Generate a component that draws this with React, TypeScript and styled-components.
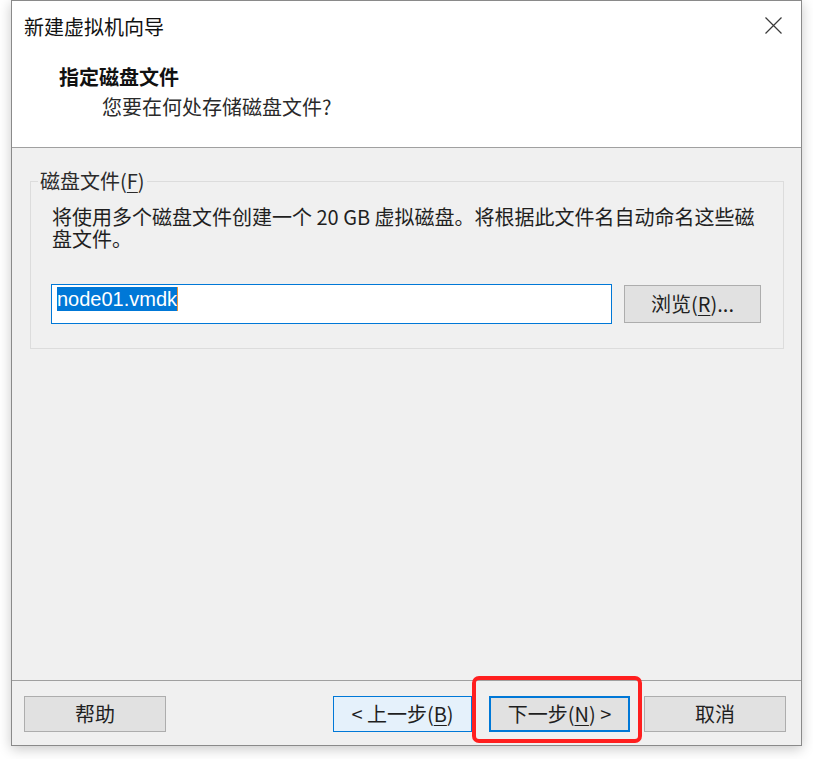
import React from "react";
import styled, { createGlobalStyle, css } from "styled-components";

const GlobalStyle = createGlobalStyle`
  html, body {
    margin: 0;
    padding: 0;
    background: #ffffff;
  }
  body {
    font-family: "Microsoft YaHei", "Noto Sans CJK SC", "Noto Sans", sans-serif;
    color: #1a1a1a;
  }
`;

const Page = styled.div`
  width: 813px;
  height: 759px;
  padding-left: 11px;
  box-sizing: border-box;
  background: #ffffff;
  overflow: hidden;
`;

const Window = styled.div`
  width: 791px;
  height: 746px;
  box-sizing: border-box;
  border: 1px solid #8a8a8a;
  display: flex;
  flex-direction: column;
  background: #f0f0f0;
  box-shadow: 0 3px 12px rgba(0, 0, 0, 0.22);
`;

const TitleBar = styled.div`
  height: 51px;
  flex: none;
  display: flex;
  align-items: center;
  justify-content: space-between;
  padding: 0 19px 0 12px;
  background: #ffffff;
`;

const TitleText = styled.span`
  font-size: 20px;
  line-height: 28px;
  color: #111111;
`;

const CloseIcon = styled.svg`
  display: block;
  margin-top: -2px;
`;

const Header = styled.div`
  height: 96px;
  flex: none;
  box-sizing: border-box;
  padding: 11px 0 0 47px;
  background: #ffffff;
  border-bottom: 1px solid #a0a0a0;
  display: flex;
  flex-direction: column;
`;

const HeaderTitle = styled.div`
  font-size: 20px;
  line-height: 28px;
  font-weight: 700;
  color: #111111;
`;

const HeaderSubtitle = styled.div`
  font-size: 20px;
  line-height: 28px;
  margin-top: 2px;
  padding-left: 43px;
  color: #2a2a2a;
`;

const Content = styled.div`
  flex: 1;
  padding: 19px 17px 0 18px;
`;

const GroupBox = styled.fieldset`
  margin: 0;
  min-width: 0;
  padding: 0 22px 24px 7px;
  border: 1px solid #dcdcdc;
`;

const GroupLegend = styled.legend`
  padding: 0 2px;
  font-size: 20px;
  line-height: 28px;
  color: #2a2a2a;
`;

const GroupBody = styled.div`
  padding-left: 14px;
  display: flex;
  flex-direction: column;
`;

const Description = styled.p`
  margin: 11px 0 0;
  font-size: 20px;
  line-height: 22px;
  color: #1f1f1f;
`;

const FileRow = styled.div`
  margin-top: 34px;
  height: 40px;
  display: flex;
  align-items: center;
  gap: 12px;
`;

const TextField = styled.div`
  flex: 1;
  height: 40px;
  box-sizing: border-box;
  margin-left: -1px;
  padding: 2px 5px;
  border: 1px solid #0078d7;
  background: #ffffff;
  display: flex;
  align-items: flex-start;
`;

const Selection = styled.span`
  font-family: "Liberation Sans", Arial, sans-serif;
  font-size: 20px;
  line-height: 24px;
  background: #0078d7;
  color: #ffffff;
  border-right: 1px solid #e8913a;
`;

const Underlined = styled.span`
  text-decoration: underline;
  text-underline-offset: 3px;
  text-decoration-thickness: 1px;
`;

type Variant = "normal" | "hover" | "default";

const Button = styled.button<{ $variant?: Variant; $width: number; $height?: number }>`
  width: ${(p) => p.$width}px;
  height: ${(p) => p.$height ?? 36}px;
  box-sizing: border-box;
  flex: none;
  margin: 0;
  padding: 0;
  font-family: "Microsoft YaHei", "Noto Sans CJK SC", "Noto Sans", sans-serif;
  font-size: 20px;
  line-height: 28px;
  color: #1f1f1f;
  display: flex;
  align-items: center;
  justify-content: center;
  background: #e1e1e1;
  border: 1px solid #adadad;
  ${(p) =>
    p.$variant === "hover" &&
    css`
      background: #e5f1fb;
      border: 1px solid #0078d7;
    `}
  ${(p) =>
    p.$variant === "default" &&
    css`
      background: #e1e1e1;
      border: 2px solid #0078d7;
    `}
`;

const Footer = styled.div`
  flex: none;
  border-top: 1px solid #a0a0a0;
  padding: 15px 15px 13px 12px;
  display: flex;
  align-items: center;
`;

const Spacer = styled.div`
  flex: 1;
`;

const NextWrap = styled.div`
  position: relative;
  margin-left: 17px;
`;

const Highlight = styled.span`
  position: absolute;
  top: -20px;
  left: -17px;
  right: -12px;
  bottom: -11px;
  border: 4px solid #ff1f1f;
  border-radius: 7px;
  pointer-events: none;
`;

const CancelWrap = styled.div`
  margin-left: 14px;
`;

export default function App() {
  return (
    <>
      <GlobalStyle />
      <Page>
        <Window>
          <TitleBar>
            <TitleText>新建虚拟机向导</TitleText>
            <CloseIcon width="17" height="17" viewBox="0 0 17 17">
              <path d="M0.5 0.5 L16.5 16.5 M16.5 0.5 L0.5 16.5" stroke="#3a3a3a" strokeWidth="1.2" fill="none" />
            </CloseIcon>
          </TitleBar>
          <Header>
            <HeaderTitle>指定磁盘文件</HeaderTitle>
            <HeaderSubtitle>您要在何处存储磁盘文件?</HeaderSubtitle>
          </Header>
          <Content>
            <GroupBox>
              <GroupLegend>
                磁盘文件(<Underlined>F</Underlined>)
              </GroupLegend>
              <GroupBody>
                <Description>
                  将使用多个磁盘文件创建一个 20 GB 虚拟磁盘。将根据此文件名自动命名这些磁盘文件。
                </Description>
                <FileRow>
                  <TextField>
                    <Selection>node01.vmdk</Selection>
                  </TextField>
                  <Button $width={137} $height={38}>
                    浏览(<Underlined>R</Underlined>)...
                  </Button>
                </FileRow>
              </GroupBody>
            </GroupBox>
          </Content>
          <Footer>
            <Button $width={142}>帮助</Button>
            <Spacer />
            <Button $width={139} $variant="hover">
              &lt; 上一步(<Underlined>B</Underlined>)
            </Button>
            <NextWrap>
              <Button $width={141} $variant="default">
                下一步(<Underlined>N</Underlined>) &gt;
              </Button>
              <Highlight />
            </NextWrap>
            <CancelWrap>
              <Button $width={142}>取消</Button>
            </CancelWrap>
          </Footer>
        </Window>
      </Page>
    </>
  );
}
